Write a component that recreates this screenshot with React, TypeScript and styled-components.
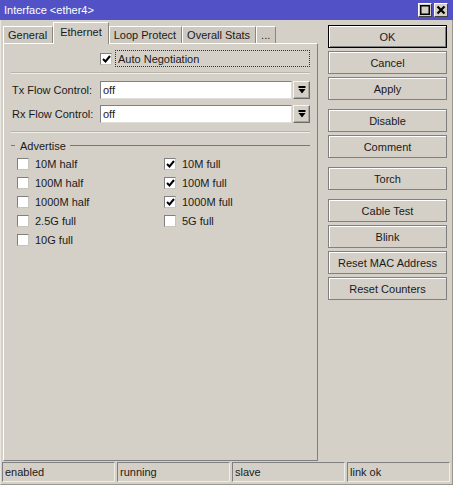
import React from 'react';
import styled, { createGlobalStyle } from 'styled-components';

const GlobalStyle = createGlobalStyle`
  html, body {
    margin: 0;
    padding: 0;
    background: #d4d0c8;
  }
  body {
    font-family: 'Liberation Sans', Arial, sans-serif;
    font-size: 11px;
    color: #1a1a1a;
  }
`;

const tabs = ['General', 'Ethernet', 'Loop Protect', 'Overall Stats', '...'];

const advertise = [
  { label: '10M half', checked: false },
  { label: '10M full', checked: true },
  { label: '100M half', checked: false },
  { label: '100M full', checked: true },
  { label: '1000M half', checked: false },
  { label: '1000M full', checked: true },
  { label: '2.5G full', checked: false },
  { label: '5G full', checked: false },
  { label: '10G full', checked: false }
];

// buttons on the right side, gap marks a bigger space before it
const actions = [
  { label: 'OK', isDefault: true },
  { label: 'Cancel' },
  { label: 'Apply' },
  { label: 'Disable', gap: true },
  { label: 'Comment' },
  { label: 'Torch', gap: true },
  { label: 'Cable Test', gap: true },
  { label: 'Blink' },
  { label: 'Reset MAC Address' },
  { label: 'Reset Counters' }
];

const status = ['enabled', 'running', 'slave', 'link ok'];

function Check({ checked }: { checked: boolean }) {
  return (
    <CheckBox>
      {checked && (
        <svg width="9" height="8" viewBox="0 0 9 8">
          <path d="M1 4 L3.5 6.5 L8 1" stroke="#000" strokeWidth="2" fill="none" />
        </svg>
      )}
    </CheckBox>
  );
}

function DropArrow() {
  return (
    <svg width="8" height="8" viewBox="0 0 8 8">
      <rect x="0.5" y="0" width="7" height="2" fill="#000" />
      <polygon points="0.5,3 7.5,3 4,7.5" fill="#000" />
    </svg>
  );
}

export default function App() {
  return (
    <Window>
      <GlobalStyle />
      <TitleBar>
        <Title>Interface &lt;ether4&gt;</Title>
        <TitleButtons>
          <TitleButton>
            <svg width="10" height="10" viewBox="0 0 10 10">
              <rect x="0.75" y="0.75" width="8.5" height="8.5" stroke="#000" strokeWidth="1.5" fill="none" />
            </svg>
          </TitleButton>
          <TitleButton>
            <svg width="10" height="10" viewBox="0 0 10 10">
              <path d="M1.5 1.5 L8.5 8.5 M8.5 1.5 L1.5 8.5" stroke="#000" strokeWidth="2.2" />
            </svg>
          </TitleButton>
        </TitleButtons>
      </TitleBar>

      <Body>
        <Main>
          <TabRow>
            {tabs.map((t) => (
              <Tab key={t} active={t === 'Ethernet'}>
                {t}
              </Tab>
            ))}
          </TabRow>
          <Panel>
            <AutoRow>
              <Check checked />
              <FocusLabel>Auto Negotiation</FocusLabel>
            </AutoRow>
            <Separator top={5} />
            <FieldRow>
              <FieldLabel>Tx Flow Control:</FieldLabel>
              <Input>off</Input>
              <DropButton>
                <DropArrow />
              </DropButton>
            </FieldRow>
            <FieldRow>
              <FieldLabel>Rx Flow Control:</FieldLabel>
              <Input>off</Input>
              <DropButton>
                <DropArrow />
              </DropButton>
            </FieldRow>
            <Separator top={2} />
            <Legend>
              <LegendText>Advertise</LegendText>
            </Legend>
            <CheckGrid>
              {advertise.map((a) => (
                <CheckItem key={a.label}>
                  <Check checked={a.checked} />
                  <span>{a.label}</span>
                </CheckItem>
              ))}
            </CheckGrid>
          </Panel>
        </Main>

        <Side>
          {actions.map((a) => (
            <Button key={a.label} isDefault={a.isDefault} gap={a.gap}>
              {a.label}
            </Button>
          ))}
        </Side>
      </Body>

      <StatusBar>
        {status.map((s) => (
          <StatusCell key={s}>{s}</StatusCell>
        ))}
      </StatusBar>
    </Window>
  );
}

const Window = styled.div`
  width: 453px;
  height: 485px;
  box-sizing: border-box;
  display: flex;
  flex-direction: column;
  border-left: 1px solid #e8e6e0;
  border-right: 1px solid #9a978f;
  border-bottom: 1px solid #9a978f;
`;

const TitleBar = styled.div`
  height: 21px;
  background: #5252c6;
  display: flex;
  align-items: center;
  justify-content: space-between;
  padding: 0 4px 0 4px;
  margin-left: -1px;
  margin-right: -1px;
`;

const Title = styled.span`
  color: #fff;
  font-size: 11px;
`;

const TitleButtons = styled.div`
  display: flex;
  gap: 2px;
  margin-right: 1px;
`;

const TitleButton = styled.div`
  width: 14px;
  height: 14px;
  box-sizing: border-box;
  background: #d4d0c8;
  border: 1px solid #404040;
  border-top-color: #fff;
  border-left-color: #fff;
  display: flex;
  align-items: center;
  justify-content: center;
`;

const Body = styled.div`
  flex: 1;
  display: flex;
  padding: 2px 0 0 2px;
  gap: 10px;
`;

const Main = styled.div`
  width: 315px;
  display: flex;
  flex-direction: column;
`;

const TabRow = styled.div`
  height: 21px;
  display: flex;
  align-items: flex-end;
  position: relative;
  z-index: 1;
`;

const Tab = styled.div<{ active?: boolean }>`
  height: ${(p) => (p.active ? '22px' : '17px')};
  margin-bottom: ${(p) => (p.active ? '-1px' : '0')};
  padding: ${(p) => (p.active ? '0 6px 3px 6px' : '0 5px 0 4px')};
  box-sizing: border-box;
  display: flex;
  align-items: center;
  white-space: nowrap;
  background: ${(p) => (p.active ? '#d4d0c8' : '#cdc9c1')};
  border-top: 1px solid #fff;
  border-left: 1px solid #fff;
  border-right: 1px solid #8a877f;
  font-size: 11px;
`;

const Panel = styled.div`
  height: 418px;
  box-sizing: border-box;
  border: 1px solid #fff;
  border-right-color: #808080;
  border-bottom-color: #808080;
  padding: 0 7px 0 7px;
  display: flex;
  flex-direction: column;
`;

const AutoRow = styled.div`
  display: flex;
  align-items: center;
  margin-top: 6px;
  padding-left: 89px;
  gap: 3px;
`;

const FocusLabel = styled.div`
  flex: 1;
  height: 17px;
  box-sizing: border-box;
  border: 1px dotted #333;
  display: flex;
  align-items: center;
  padding-left: 2px;
`;

const Separator = styled.div<{ top: number }>`
  height: 0;
  border-top: 1px solid #b8b4ac;
  border-bottom: 1px solid #f0eee8;
  margin: ${(p) => p.top}px 0 7px;
`;

const FieldRow = styled.div`
  display: flex;
  align-items: center;
  height: 18px;
  margin-bottom: 6px;
  padding-left: 1px;
`;

const FieldLabel = styled.div`
  width: 88px;
`;

const Input = styled.div`
  width: 192px;
  height: 18px;
  box-sizing: border-box;
  background: #fff;
  border: 1px solid #808080;
  border-right-color: #e0ded8;
  border-bottom-color: #e0ded8;
  display: flex;
  align-items: center;
  padding-left: 2px;
`;

const DropButton = styled.div`
  width: 17px;
  height: 18px;
  margin-left: 1px;
  box-sizing: border-box;
  border: 1px solid #6a6a6a;
  border-top-color: #f4f4f4;
  border-left-color: #f4f4f4;
  box-shadow: inset -1px -1px 0 #a8a49c;
  display: flex;
  align-items: center;
  justify-content: center;
`;

const Legend = styled.div`
  display: flex;
  align-items: center;
  height: 13px;
  margin-top: -1px;
  &::before {
    content: '';
    width: 4px;
    border-top: 1px solid #7a776f;
  }
  &::after {
    content: '';
    flex: 1;
    border-top: 1px solid #7a776f;
  }
`;

const LegendText = styled.span`
  padding: 0 4px 0 5px;
`;

const CheckGrid = styled.div`
  display: grid;
  grid-template-columns: 147px 1fr;
  grid-auto-rows: 19px;
  margin-top: 2px;
  padding-left: 6px;
`;

const CheckItem = styled.div`
  display: flex;
  align-items: center;
  gap: 6px;
`;

const CheckBox = styled.div`
  width: 12px;
  height: 12px;
  box-sizing: border-box;
  background: #fff;
  border: 1px solid #808080;
  border-right-color: #c8c4bc;
  border-bottom-color: #c8c4bc;
  display: flex;
  align-items: center;
  justify-content: center;
  flex-shrink: 0;
`;

const Side = styled.div`
  width: 119px;
  display: flex;
  flex-direction: column;
  padding-top: 3px;
`;

const Button = styled.div<{ isDefault?: boolean; gap?: boolean }>`
  height: 23px;
  box-sizing: border-box;
  margin-top: ${(p) => (p.gap ? '9px' : '3px')};
  &:first-child {
    margin-top: 0;
  }
  border: 1px solid ${(p) => (p.isDefault ? '#000' : '#808080')};
  box-shadow: ${(p) =>
    p.isDefault ? 'inset 1px 1px 0 #fff, inset -1px -1px 0 #808080' : 'inset 1px 1px 0 #fff'};
  display: flex;
  align-items: center;
  justify-content: center;
  font-size: 11px;
`;

const StatusBar = styled.div`
  display: grid;
  grid-template-columns: 113px 113px 113px 103px;
  gap: 2px;
  padding: 1px 0 2px 1px;
`;

const StatusCell = styled.div`
  height: 20px;
  box-sizing: border-box;
  border: 1px solid #808080;
  border-right-color: #f0eee8;
  border-bottom-color: #f0eee8;
  display: flex;
  align-items: center;
  padding-left: 2px;
`;
